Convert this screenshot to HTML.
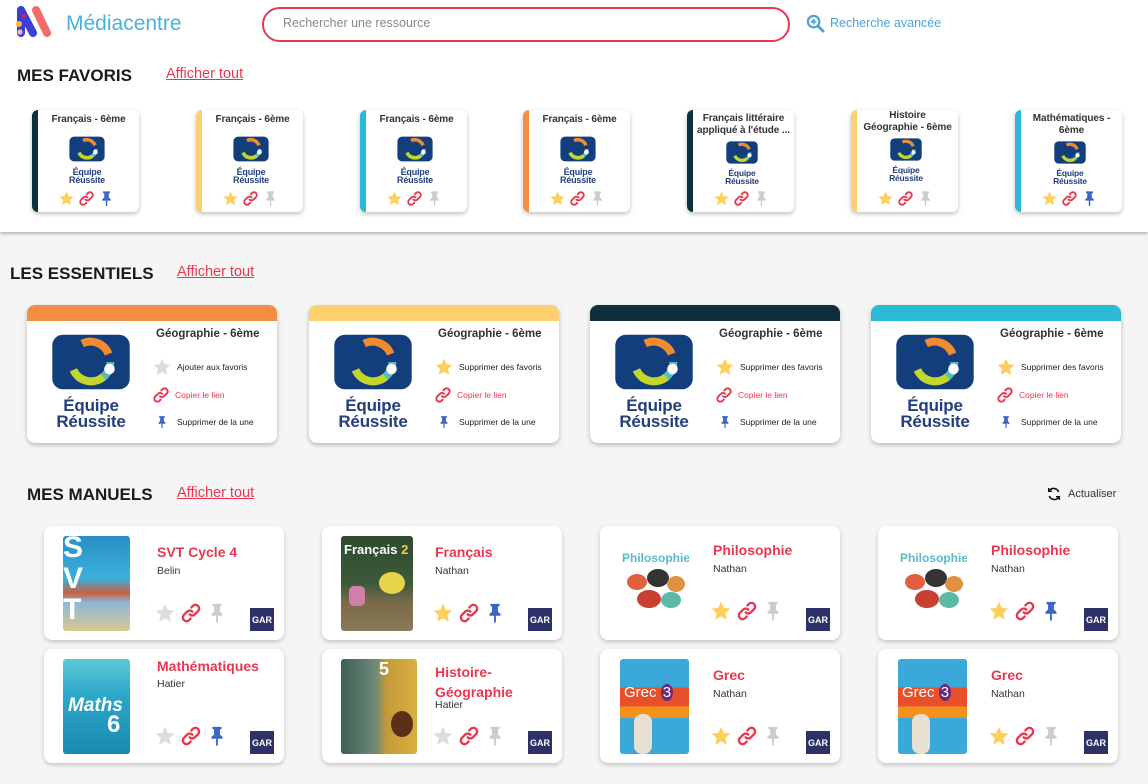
<!DOCTYPE html>
<html><head><meta charset="utf-8">
<style>
*{box-sizing:border-box;margin:0;padding:0}
body{width:1148px;height:784px;overflow:hidden;background:#f5f5f5;font-family:"Liberation Sans",sans-serif;position:relative;color:#222}
.a{position:absolute}
.top{position:absolute;left:0;top:0;width:1148px;height:232px;background:#fff;box-shadow:0 2px 3px rgba(0,0,0,.25)}
h2{position:absolute;font-size:17px;font-weight:bold;color:#1a1a1a}
.aff{position:absolute;font-size:14.5px;color:#e8384f;text-decoration:underline}
.fav{position:absolute;top:110px;width:107px;height:102px;background:#fff;border-radius:6px;box-shadow:0 2px 5px rgba(0,0,0,.25);overflow:hidden;border-left:6px solid}
.fav .t{position:absolute;left:0;right:0;top:3px;text-align:center;font-size:10px;font-weight:bold;color:#333;line-height:12px;letter-spacing:-.1px}
.fav .lg{position:absolute;left:29px;width:40px}
.fav .ic{position:absolute;left:20px;top:80px;height:18px;display:flex;gap:3px}
.ess{position:absolute;top:305px;width:250px;height:138px;background:#fff;border-radius:8px;box-shadow:0 2px 5px rgba(0,0,0,.25);overflow:hidden;border-top:16px solid}
.ess .lg{position:absolute;left:20px;top:10px;width:88px}
.ess .t{position:absolute;left:129px;top:7px;font-size:11.5px;font-weight:bold;color:#333}
.ess .r{position:absolute;left:125px;display:flex;align-items:center;font-size:8.5px;color:#222}
.ess .r svg{margin-right:5px}
.man{position:absolute;width:240px;height:114px;background:#fff;border-radius:8px;box-shadow:0 2px 5px rgba(0,0,0,.2)}
.man .cv{position:absolute;left:19px;top:10px;width:67px;height:95px;border-radius:3px;overflow:hidden}
.man .tt{position:absolute;left:113px;top:17px;font-size:14px;font-weight:bold;color:#e8384f;line-height:19px}
.man .pb{position:absolute;left:113px;font-size:10.5px;color:#333}
.man .ic{position:absolute;left:110px;top:76px;display:flex;gap:4px}
.gar{position:absolute;right:10px;bottom:9px;width:24px;height:23px;background:#2c3268;color:#fff;font-size:9px;font-weight:bold;display:flex;align-items:center;justify-content:center}
.lgt{color:#233f7d;font-weight:bold;text-align:center;line-height:.92;letter-spacing:-.2px}
</style></head><body>
<svg width="0" height="0" style="position:absolute">
<defs>
<symbol id="star" viewBox="0 0 24 24"><path d="M12 2l3 6.6 7.2.8-5.4 4.9 1.5 7.1L12 17.8 5.7 21.4l1.5-7.1L1.8 9.4 9 8.6z"/></symbol>
<symbol id="link" viewBox="0 0 24 24"><g fill="none" stroke="#e8384f" stroke-width="2.6" stroke-linecap="round"><path d="M10.5 13.5a4 4 0 0 0 5.7 0l3.5-3.5a4 4 0 0 0-5.7-5.7l-1.6 1.6"/><path d="M13.5 10.5a4 4 0 0 0-5.7 0L4.3 14a4 4 0 0 0 5.7 5.7l1.6-1.6"/></g></symbol>
<symbol id="pin" viewBox="0 0 24 24"><path d="M7 2h10v2.2l-1.8.8v5.5L18 13v2h-5v7l-1 1-1-1v-7H6v-2l2.8-2.5V5L7 4.2z"/></symbol>
<symbol id="er" viewBox="0 0 100 70"><rect x="6" y="4" width="88" height="62" rx="12" fill="#123f7c"/><circle cx="50" cy="35" r="22" fill="none" stroke="#5bb9c7" stroke-width="9" stroke-dasharray="50 90"/><path d="M30 44a22 22 0 0 0 34 8" fill="none" stroke="#c5d62a" stroke-width="9"/><path d="M40 14a22 22 0 0 1 30 12" fill="none" stroke="#f28a30" stroke-width="9"/><circle cx="71" cy="43" r="6" fill="#fff"/><circle cx="50" cy="35" r="11" fill="#123f7c"/></symbol>
</defs></svg>

<div class="top"></div>
<svg class="a" style="left:14px;top:3px" width="40" height="36" viewBox="0 0 40 36"><path d="M7 7V30M7 7L19 30" stroke="#3b3fd8" stroke-width="8" stroke-linecap="round" stroke-linejoin="round" fill="none"/><path d="M22 7L33 30" stroke="#f26b6b" stroke-width="8" stroke-linecap="round"/><circle cx="10" cy="13" r="2" fill="#e8203a"/><circle cx="5" cy="21" r="3" fill="#f8b940"/><circle cx="6" cy="29" r="2.6" fill="#f6b3b3"/></svg>
<div class="a" style="left:66px;top:12px;font-size:21px;color:#4ab0de">Médiacentre</div>
<div class="a" style="left:262px;top:7px;width:528px;height:35px;border:2px solid #e8384f;border-radius:18px;"></div>
<div class="a" style="left:283px;top:16px;font-size:12.5px;color:#888">Rechercher une ressource</div>
<svg class="a" style="left:806px;top:14px" width="19" height="19" viewBox="0 0 20 20"><circle cx="8" cy="8" r="6" fill="none" stroke="#4ba3d6" stroke-width="2.4"/><path d="M12.5 12.5L18 18" stroke="#4ba3d6" stroke-width="3" stroke-linecap="round"/><path d="M8 5v6M5 8h6" stroke="#4ba3d6" stroke-width="1.8"/></svg>
<div class="a" style="left:830px;top:16px;font-size:12.5px;color:#4ba3d6">Recherche avancée</div>

<h2 style="left:17px;top:66px">MES FAVORIS</h2>
<div class="aff" style="left:166px;top:66px">Afficher tout</div>

<div class="fav" style="left:32px;border-color:#0f2f3a"><div class="t" style="top:4px">Français - 6ème</div><div class="lg" style="top:25px"><svg width="40" height="28"><use href="#er"/></svg><div class="lgt" style="font-size:9px">Équipe<br>Réussite</div></div><div class="ic"><svg width="17" height="17" fill="#fdd05e"><use href="#star"/></svg><svg width="17" height="17"><use href="#link"/></svg><svg width="17" height="17" fill="#3a66c4"><use href="#pin"/></svg></div></div>
<div class="fav" style="left:196px;border-color:#fcd06e"><div class="t" style="top:4px">Français - 6ème</div><div class="lg" style="top:25px"><svg width="40" height="28"><use href="#er"/></svg><div class="lgt" style="font-size:9px">Équipe<br>Réussite</div></div><div class="ic"><svg width="17" height="17" fill="#fdd05e"><use href="#star"/></svg><svg width="17" height="17"><use href="#link"/></svg><svg width="17" height="17" fill="#ccc"><use href="#pin"/></svg></div></div>
<div class="fav" style="left:360px;border-color:#2bbad6"><div class="t" style="top:4px">Français - 6ème</div><div class="lg" style="top:25px"><svg width="40" height="28"><use href="#er"/></svg><div class="lgt" style="font-size:9px">Équipe<br>Réussite</div></div><div class="ic"><svg width="17" height="17" fill="#fdd05e"><use href="#star"/></svg><svg width="17" height="17"><use href="#link"/></svg><svg width="17" height="17" fill="#ccc"><use href="#pin"/></svg></div></div>
<div class="fav" style="left:523px;border-color:#f58d42"><div class="t" style="top:4px">Français - 6ème</div><div class="lg" style="top:25px"><svg width="40" height="28"><use href="#er"/></svg><div class="lgt" style="font-size:9px">Équipe<br>Réussite</div></div><div class="ic"><svg width="17" height="17" fill="#fdd05e"><use href="#star"/></svg><svg width="17" height="17"><use href="#link"/></svg><svg width="17" height="17" fill="#ccc"><use href="#pin"/></svg></div></div>
<div class="fav" style="left:687px;border-color:#0f2f3a"><div class="t">Français littéraire<br>appliqué à l'étude ...</div><div class="lg" style="top:30px"><svg width="40" height="25"><use href="#er"/></svg><div class="lgt" style="font-size:8.5px">Équipe<br>Réussite</div></div><div class="ic"><svg width="17" height="17" fill="#fdd05e"><use href="#star"/></svg><svg width="17" height="17"><use href="#link"/></svg><svg width="17" height="17" fill="#ccc"><use href="#pin"/></svg></div></div>
<div class="fav" style="left:851px;border-color:#fcd06e"><div class="t" style="top:0px">Histoire<br>Géographie - 6ème</div><div class="lg" style="top:27px"><svg width="40" height="25"><use href="#er"/></svg><div class="lgt" style="font-size:8.5px">Équipe<br>Réussite</div></div><div class="ic"><svg width="17" height="17" fill="#fdd05e"><use href="#star"/></svg><svg width="17" height="17"><use href="#link"/></svg><svg width="17" height="17" fill="#ccc"><use href="#pin"/></svg></div></div>
<div class="fav" style="left:1015px;border-color:#2bbad6"><div class="t" style="top:3px">Mathématiques -<br>6ème</div><div class="lg" style="top:30px"><svg width="40" height="25"><use href="#er"/></svg><div class="lgt" style="font-size:8.5px">Équipe<br>Réussite</div></div><div class="ic"><svg width="17" height="17" fill="#fdd05e"><use href="#star"/></svg><svg width="17" height="17"><use href="#link"/></svg><svg width="17" height="17" fill="#3a66c4"><use href="#pin"/></svg></div></div>

<h2 style="left:10px;top:264px">LES ESSENTIELS</h2>
<div class="aff" style="left:177px;top:264px">Afficher tout</div>

<div class="ess" style="left:27px;border-color:#f58d42"><div class="lg"><svg width="88" height="62"><use href="#er"/></svg><div class="lgt" style="font-size:17px">Équipe<br>Réussite</div></div><div class="t">Géographie - 6ème</div>
<div class="r" style="top:36px"><svg width="20" height="20" fill="#ddd"><use href="#star"/></svg>Ajouter aux favoris</div>
<div class="r" style="top:65px;color:#e8384f"><svg width="18" height="18"><use href="#link"/></svg>Copier le lien</div>
<div class="r" style="top:94px"><svg width="14" height="14" fill="#3a66c4" style="margin:0 8px 0 3px"><use href="#pin"/></svg>Supprimer de la une</div></div>
<div class="ess" style="left:309px;border-color:#fcd06e"><div class="lg"><svg width="88" height="62"><use href="#er"/></svg><div class="lgt" style="font-size:17px">Équipe<br>Réussite</div></div><div class="t">Géographie - 6ème</div>
<div class="r" style="top:36px"><svg width="20" height="20" fill="#fdd05e"><use href="#star"/></svg>Supprimer des favoris</div>
<div class="r" style="top:65px;color:#e8384f"><svg width="18" height="18"><use href="#link"/></svg>Copier le lien</div>
<div class="r" style="top:94px"><svg width="14" height="14" fill="#3a66c4" style="margin:0 8px 0 3px"><use href="#pin"/></svg>Supprimer de la une</div></div>
<div class="ess" style="left:590px;border-color:#0f2f3a"><div class="lg"><svg width="88" height="62"><use href="#er"/></svg><div class="lgt" style="font-size:17px">Équipe<br>Réussite</div></div><div class="t">Géographie - 6ème</div>
<div class="r" style="top:36px"><svg width="20" height="20" fill="#fdd05e"><use href="#star"/></svg>Supprimer des favoris</div>
<div class="r" style="top:65px;color:#e8384f"><svg width="18" height="18"><use href="#link"/></svg>Copier le lien</div>
<div class="r" style="top:94px"><svg width="14" height="14" fill="#3a66c4" style="margin:0 8px 0 3px"><use href="#pin"/></svg>Supprimer de la une</div></div>
<div class="ess" style="left:871px;border-color:#2bbad6"><div class="lg"><svg width="88" height="62"><use href="#er"/></svg><div class="lgt" style="font-size:17px">Équipe<br>Réussite</div></div><div class="t">Géographie - 6ème</div>
<div class="r" style="top:36px"><svg width="20" height="20" fill="#fdd05e"><use href="#star"/></svg>Supprimer des favoris</div>
<div class="r" style="top:65px;color:#e8384f"><svg width="18" height="18"><use href="#link"/></svg>Copier le lien</div>
<div class="r" style="top:94px"><svg width="14" height="14" fill="#3a66c4" style="margin:0 8px 0 3px"><use href="#pin"/></svg>Supprimer de la une</div></div>

<h2 style="left:27px;top:485px">MES MANUELS</h2>
<div class="aff" style="left:177px;top:485px">Afficher tout</div>
<svg class="a" style="left:1046px;top:486px" width="16" height="16" viewBox="0 0 24 24" fill="none" stroke="#111" stroke-width="2.4"><path d="M19 9a8 8 0 0 0-14-2"/><path d="M5 15a8 8 0 0 0 14 2"/><path d="M4 3v5h5M20 21v-5h-5" stroke-width="2"/></svg>
<div class="a" style="left:1068px;top:488px;font-size:11px;color:#333">Actualiser</div>

<div class="man" style="left:44px;top:526px"><div class="cv" style="background:linear-gradient(#2a8fc8 0%,#3ab0d8 45%,#c7613f 60%,#8fb6d8 70%,#d8c890 100%)"><div style="position:absolute;left:0;top:-4px;color:#fff;font-weight:bold;font-size:30px;line-height:31px">S<br>V<br>T</div></div><div class="tt">SVT Cycle 4</div><div class="pb" style="top:39px">Belin</div><div class="ic"><svg width="22" height="22" fill="#ddd"><use href="#star"/></svg><svg width="22" height="22"><use href="#link"/></svg><svg width="22" height="22" fill="#ccc"><use href="#pin"/></svg></div><div class="gar">GAR</div></div>
<div class="man" style="left:322px;top:526px"><div class="cv" style="left:19px;width:72px;background:linear-gradient(#2e4a2e,#3d5a3a 50%,#7a6a4a 70%,#8a7a5a)"><div style="position:absolute;left:3px;top:6px;color:#fff;font-weight:bold;font-size:13px">Français <span style="color:#f5d040">2</span></div><div style="position:absolute;left:38px;top:36px;width:26px;height:22px;border-radius:50%;background:#e8d44a"></div><div style="position:absolute;left:8px;top:50px;width:16px;height:20px;background:#d080a8;border-radius:5px"></div></div><div class="tt">Français</div><div class="pb" style="top:39px">Nathan</div><div class="ic"><svg width="22" height="22" fill="#fdd05e"><use href="#star"/></svg><svg width="22" height="22"><use href="#link"/></svg><svg width="22" height="22" fill="#3a66c4"><use href="#pin"/></svg></div><div class="gar">GAR</div></div>
<div class="man" style="left:600px;top:526px"><div class="cv" style="left:19px;width:70px;background:#fff"><div style="position:absolute;left:3px;top:15px;color:#5bb9c7;font-weight:bold;font-size:12px">Philosophie</div><div style="position:absolute;left:8px;top:38px;width:20px;height:16px;border-radius:50%;background:#e0603f"></div><div style="position:absolute;left:28px;top:33px;width:22px;height:18px;border-radius:50%;background:#333"></div><div style="position:absolute;left:48px;top:40px;width:18px;height:16px;border-radius:50%;background:#e0903f"></div><div style="position:absolute;left:18px;top:54px;width:24px;height:18px;border-radius:50%;background:#c94030"></div><div style="position:absolute;left:42px;top:56px;width:20px;height:16px;border-radius:50%;background:#5bb9a7"></div></div><div class="tt" style="top:15px">Philosophie</div><div class="pb" style="top:37px">Nathan</div><div class="ic" style="top:74px"><svg width="22" height="22" fill="#fdd05e"><use href="#star"/></svg><svg width="22" height="22"><use href="#link"/></svg><svg width="22" height="22" fill="#ccc"><use href="#pin"/></svg></div><div class="gar">GAR</div></div>
<div class="man" style="left:878px;top:526px"><div class="cv" style="left:19px;width:70px;background:#fff"><div style="position:absolute;left:3px;top:15px;color:#5bb9c7;font-weight:bold;font-size:12px">Philosophie</div><div style="position:absolute;left:8px;top:38px;width:20px;height:16px;border-radius:50%;background:#e0603f"></div><div style="position:absolute;left:28px;top:33px;width:22px;height:18px;border-radius:50%;background:#333"></div><div style="position:absolute;left:48px;top:40px;width:18px;height:16px;border-radius:50%;background:#e0903f"></div><div style="position:absolute;left:18px;top:54px;width:24px;height:18px;border-radius:50%;background:#c94030"></div><div style="position:absolute;left:42px;top:56px;width:20px;height:16px;border-radius:50%;background:#5bb9a7"></div></div><div class="tt" style="top:15px">Philosophie</div><div class="pb" style="top:37px">Nathan</div><div class="ic" style="top:74px"><svg width="22" height="22" fill="#fdd05e"><use href="#star"/></svg><svg width="22" height="22"><use href="#link"/></svg><svg width="22" height="22" fill="#3a66c4"><use href="#pin"/></svg></div><div class="gar">GAR</div></div>

<div class="man" style="left:44px;top:649px"><div class="cv" style="background:linear-gradient(#5cc8d8,#2aa7c8 40%,#1c88b0)"><div style="position:absolute;left:5px;top:36px;color:#fff;font-weight:bold;font-size:19px;font-style:italic">Maths</div><div style="position:absolute;left:44px;top:52px;color:#fff;font-weight:bold;font-size:24px">6</div></div><div class="tt" style="top:8px">Mathématiques</div><div class="pb" style="top:29px">Hatier</div><div class="ic"><svg width="22" height="22" fill="#ddd"><use href="#star"/></svg><svg width="22" height="22"><use href="#link"/></svg><svg width="22" height="22" fill="#3a66c4"><use href="#pin"/></svg></div><div class="gar">GAR</div></div>
<div class="man" style="left:322px;top:649px"><div class="cv" style="left:19px;width:76px;background:linear-gradient(90deg,#3f5f55,#6c8878 45%,#c49a3a 60%,#d8b040)"><div style="position:absolute;left:38px;top:0;color:#fff;font-weight:bold;font-size:18px">5</div><div style="position:absolute;left:50px;top:52px;width:22px;height:26px;border-radius:50%;background:#5a3018"></div></div><div class="tt" style="top:13px;line-height:20px">Histoire-<br>Géographie</div><div class="pb" style="top:50px">Hatier</div><div class="ic"><svg width="22" height="22" fill="#ddd"><use href="#star"/></svg><svg width="22" height="22"><use href="#link"/></svg><svg width="22" height="22" fill="#ccc"><use href="#pin"/></svg></div><div class="gar">GAR</div></div>
<div class="man" style="left:600px;top:649px"><div class="cv" style="left:20px;width:69px;background:linear-gradient(#3aa8d8 0%,#3aa8d8 30%,#e8502a 30%,#e8502a 50%,#f5901a 50%,#f5901a 62%,#3aa8d8 62%)"><div style="position:absolute;left:4px;top:25px;color:#fff;font-size:15px">Grec <span style="background:#6a2a7a;border-radius:50%;padding:0 2px">3</span></div><div style="position:absolute;left:14px;top:55px;width:18px;height:40px;background:#e8e0d0;border-radius:8px"></div></div><div class="tt">Grec</div><div class="pb" style="top:39px">Nathan</div><div class="ic" style="top:76px"><svg width="22" height="22" fill="#fdd05e"><use href="#star"/></svg><svg width="22" height="22"><use href="#link"/></svg><svg width="22" height="22" fill="#ccc"><use href="#pin"/></svg></div><div class="gar">GAR</div></div>
<div class="man" style="left:878px;top:649px"><div class="cv" style="left:20px;width:69px;background:linear-gradient(#3aa8d8 0%,#3aa8d8 30%,#e8502a 30%,#e8502a 50%,#f5901a 50%,#f5901a 62%,#3aa8d8 62%)"><div style="position:absolute;left:4px;top:25px;color:#fff;font-size:15px">Grec <span style="background:#6a2a7a;border-radius:50%;padding:0 2px">3</span></div><div style="position:absolute;left:14px;top:55px;width:18px;height:40px;background:#e8e0d0;border-radius:8px"></div></div><div class="tt">Grec</div><div class="pb" style="top:39px">Nathan</div><div class="ic" style="top:76px"><svg width="22" height="22" fill="#fdd05e"><use href="#star"/></svg><svg width="22" height="22"><use href="#link"/></svg><svg width="22" height="22" fill="#ccc"><use href="#pin"/></svg></div><div class="gar">GAR</div></div>
</body></html>
